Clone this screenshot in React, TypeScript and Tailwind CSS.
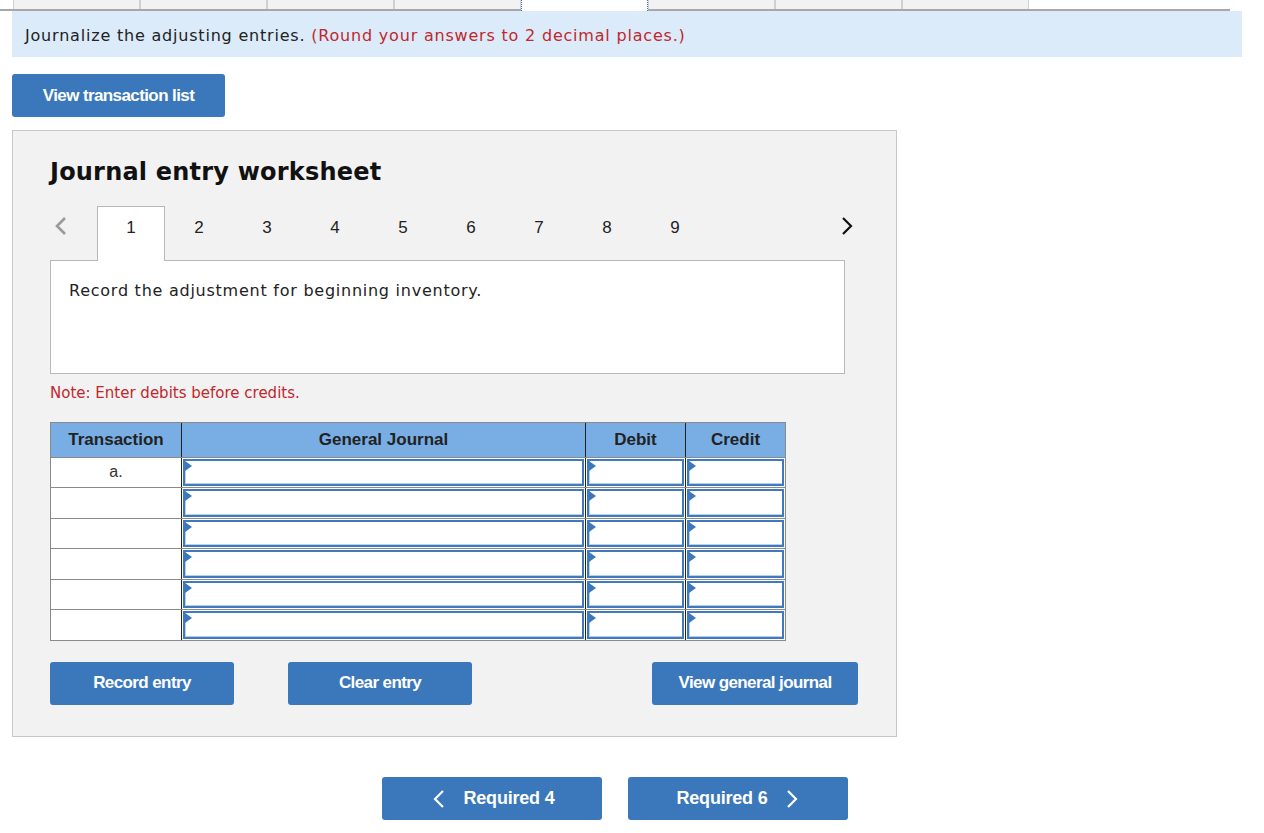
import React from "react";

const verdana = "font-['DejaVu_Sans','Verdana',sans-serif]";
const arial = "font-['Liberation_Sans',Arial,sans-serif]";

function TopTabs() {
  const tabs = [0, 1, 2, 3, 4, 5, 6, 7];
  return (
    <div className="flex h-[11px] w-[1230px] items-stretch border-b-2 border-[#a8a8a8] pl-[13px]">
      {tabs.map((i) =>
        i === 4 ? (
          <div
            key={i}
            className="mb-[-2px] w-[127px] border-x border-dotted border-x-[#3a77bb] bg-white"
          />
        ) : (
          <div
            key={i}
            className="w-[127px] border-x border-[#d0d0d0] bg-[#f2f2f2]"
          />
        ),
      )}
    </div>
  );
}

function BlueButton({
  children,
  className,
}: {
  children: React.ReactNode;
  className?: string;
}) {
  return (
    <button
      className={`flex h-[43px] items-center justify-center rounded-[3px] bg-[#3a77bb] text-[17px] font-bold tracking-[-0.6px] text-white ${arial} ${className ?? ""}`}
    >
      {children}
    </button>
  );
}

function Triangle() {
  return (
    <svg
      className="absolute left-0 top-0"
      width="7"
      height="10"
      viewBox="0 0 7 10"
      aria-hidden
    >
      <path d="M0 0 L7 5 L0 10 Z" fill="#3a77bb" />
    </svg>
  );
}

function InputCell({ w }: { w: string }) {
  return (
    <div className={`relative ${w} h-full border-l border-[#222] px-[1px] py-[1px]`}>
      <div className="relative h-full border-2 border-[#4179bd] bg-white shadow-[inset_1px_-1px_0_#b5cfee]">
        <Triangle />
      </div>
    </div>
  );
}

function JournalTable() {
  const rows = ["a.", "", "", "", "", ""];
  return (
    <div className="mt-[17px] w-[736px] border border-[#8a8a8a]">
      <div
        className={`flex h-[34px] bg-[#78aee4] text-[17px] font-bold text-[#222] ${arial}`}
      >
        <div className="flex w-[130px] items-center justify-center">
          Transaction
        </div>
        <div className="flex w-[404px] items-center justify-center border-l border-[#222]">
          General Journal
        </div>
        <div className="flex w-[100px] items-center justify-center border-l border-[#222]">
          Debit
        </div>
        <div className="flex w-[100px] items-center justify-center border-l border-[#222]">
          Credit
        </div>
      </div>
      {rows.map((r, i) => (
        <div
          key={i}
          className="flex h-[30.5px] border-t border-[#8a8a8a] bg-white"
        >
          <div
            className={`flex w-[130px] items-start justify-center pt-[2px] text-[16px] text-[#333] ${arial}`}
          >
            {r}
          </div>
          <InputCell w="w-[404px]" />
          <InputCell w="w-[100px]" />
          <InputCell w="w-[100px]" />
        </div>
      ))}
    </div>
  );
}

function Chevron({
  dir,
  className,
  w = 2.2,
}: {
  dir: "l" | "r";
  className?: string;
  w?: number;
}) {
  return (
    <svg
      width="12"
      height="20"
      viewBox="0 0 12 20"
      className={className}
      aria-hidden
    >
      <path
        d={dir === "l" ? "M10 2 L2 10 L10 18" : "M2 2 L10 10 L2 18"}
        fill="none"
        stroke="currentColor"
        strokeWidth={w}
      />
    </svg>
  );
}

export default function App() {
  const pages = [1, 2, 3, 4, 5, 6, 7, 8, 9];
  return (
    <div className={`min-h-[833px] w-[1264px] bg-white ${verdana}`}>
      <TopTabs />
      <div className="mx-[12px] flex h-[46px] w-[1230px] items-center bg-[#dbebf9] px-[13px] pt-[3px] text-[16px] tracking-[0.8px] text-[#222]">
        <span>
          Journalize the adjusting entries.{" "}
          <span className="text-[#c1272d]">
            (Round your answers to 2 decimal places.)
          </span>
        </span>
      </div>

      <div className="ml-[12px] mt-[17px]">
        <BlueButton className="w-[213px]">View transaction list</BlueButton>
      </div>

      <div className="ml-[12px] mt-[13px] h-[607px] w-[885px] border border-[#c8c8c8] bg-[#f2f2f2] pl-[37px] pt-[24px]">
        <h2 className="text-[24px] font-bold leading-[34px] tracking-[0.2px] text-[#111]">
          Journal entry worksheet
        </h2>

        <div
          className={`mt-[17px] flex h-[54px] w-[795px] items-stretch text-[17px] text-[#222] ${arial}`}
        >
          <div className="flex w-[47px] items-center justify-start pb-[14px] pl-[5px]">
            <Chevron dir="l" className="text-[#9a9a9a]" w={2.6} />
          </div>
          {pages.map((p) =>
            p === 1 ? (
              <div
                key={p}
                className="relative z-10 mb-[-1px] flex w-[68px] items-start justify-center border border-b-0 border-[#b8b8b8] bg-white pt-[8px]"
              >
                {p}
              </div>
            ) : (
              <div
                key={p}
                className="flex w-[68px] items-start justify-center pt-[9px]"
              >
                {p}
              </div>
            ),
          )}
          <div className="flex flex-1 items-center justify-end pb-[14px]">
            <Chevron dir="r" className="mr-[-8px] text-[#111]" />
          </div>
        </div>

        <div className="h-[114px] w-[795px] border border-[#b8b8b8] bg-white px-[18px] pt-[18px] text-[16px] tracking-[0.75px] text-[#222]">
          Record the adjustment for beginning inventory.
        </div>

        <div className="mt-[8px] text-[15px] text-[#c1272d]">
          Note: Enter debits before credits.
        </div>

        <JournalTable />

        <div className="mt-[21px] flex w-[808px]">
          <BlueButton className="w-[184px]">Record entry</BlueButton>
          <BlueButton className="ml-[54px] w-[184px]">Clear entry</BlueButton>
          <BlueButton className="ml-auto w-[206px]">View general journal</BlueButton>
        </div>
      </div>

      <div className={`ml-[382px] mt-[40px] flex gap-[26px] ${arial}`}>
        <button className="flex h-[43px] w-[220px] items-center justify-center gap-[18px] rounded-[3px] bg-[#3a77bb] pl-[4px] text-[18px] font-bold tracking-[-0.2px] text-white">
          <Chevron dir="l" />
          Required 4
        </button>
        <button className="flex h-[43px] w-[220px] items-center justify-center gap-[18px] rounded-[3px] bg-[#3a77bb] pr-[2px] text-[18px] font-bold tracking-[-0.2px] text-white">
          Required 6
          <Chevron dir="r" />
        </button>
      </div>
    </div>
  );
}
